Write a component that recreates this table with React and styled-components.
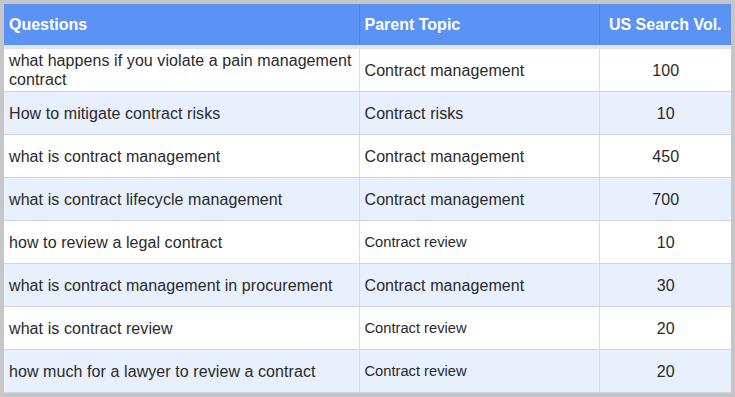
import styled, { createGlobalStyle } from 'styled-components'

const GlobalStyle = createGlobalStyle`
    body {
        margin: 0;
        background: #c6c6c6;
        font-family: "Liberation Sans", Arial, sans-serif;
    }
`;

const Frame = styled.div`
    width: 735px;
    height: 397px;
    box-sizing: border-box;
    padding: 4px 4px 0 4px;
    background: #c6c6c6;
    overflow: hidden;
`;

const Table = styled.table`
    width: 727px;
    border-collapse: collapse;
    table-layout: fixed;
    background: #fff;
`;

const HeadCell = styled.th`
    height: 41px;
    padding: 0 5px;
    background: #5b93f5;
    color: #fff;
    font-size: 16px;
    font-weight: 700;
    text-align: ${({ $align }) => $align || 'left'};
    border-right: 1px solid #4f86e6;
    border-bottom: 4px solid #dde4ee;
    &:last-child { border-right: none; }
`;

const Row = styled.tr`
    background: ${({ $alt }) => ($alt ? '#e8effd' : '#fff')};
`;

const Cell = styled.td`
    height: 42px;
    padding: 0 4px 0 5px;
    color: #2a2a2a;
    font-size: ${({ $small }) => ($small ? '14.7px' : '16px')};
    letter-spacing: ${({ $small }) => ($small ? '0' : '0.08px')};
    line-height: 19px;
    text-align: ${({ $align }) => $align || 'left'};
    border-right: 1px solid #d6dce5;
    border-bottom: 1px solid #d0d7e2;
    &:last-child { border-right: none; }
`;

const rows = [
    ['what happens if you violate a pain management contract', 'Contract management', 100],
    ['How to mitigate contract risks', 'Contract risks', 10],
    ['what is contract management', 'Contract management', 450],
    ['what is contract lifecycle management', 'Contract management', 700],
    ['how to review a legal contract', 'Contract review', 10],
    ['what is contract management in procurement', 'Contract management', 30],
    ['what is contract review', 'Contract review', 20],
    ['how much for a lawyer to review a contract', 'Contract review', 20],
];

const App = () => {
    return (
        <Frame>
            <GlobalStyle />
            <Table>
                <colgroup>
                    <col style={{ width: 355 }} />
                    <col style={{ width: 240 }} />
                    <col style={{ width: 132 }} />
                </colgroup>
                <thead>
                    <tr>
                        <HeadCell>Questions</HeadCell>
                        <HeadCell>Parent Topic</HeadCell>
                        <HeadCell $align="center">US Search Vol.</HeadCell>
                    </tr>
                </thead>
                <tbody>
                    {rows.map(([q, topic, vol], i) => (
                        <Row key={q} $alt={i % 2 === 1}>
                            <Cell>{q}</Cell>
                            <Cell $small={topic === 'Contract review'}>{topic}</Cell>
                            <Cell $align="center">{vol}</Cell>
                        </Row>
                    ))}
                </tbody>
            </Table>
        </Frame>
    )
}

export default App
